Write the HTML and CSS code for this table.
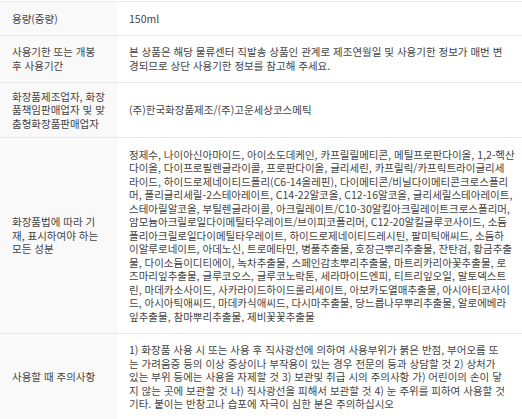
FILE: index.html
```html
<!DOCTYPE html>
<html lang="ko">
<head>
    <meta charset="UTF-8">
    <meta name="viewport" content="width=device-width, initial-scale=1.0">
    <title>상품정보 제공고시</title>
    <link rel="stylesheet" href="styles.css">
</head>
<body>
    <table class="info-table">
        <tbody>
            <tr>
                <th>용량(중량)</th>
                <td>150ml</td>
            </tr>
            <tr>
                <th>사용기한 또는 개봉 후 사용기간</th>
                <td>본 상품은 해당 물류센터 직발송 상품인 관계로 제조연월일 및 사용기한 정보가 매번 변<br>경되므로 상단 사용기한 정보를 참고해 주세요.</td>
            </tr>
            <tr>
                <th>화장품제조업자, 화장품책임판매업자 및 맞춤형화장품판매업자</th>
                <td>(주)한국화장품제조/(주)고운세상코스메틱</td>
            </tr>
            <tr>
                <th>화장품법에 따라 기재, 표시하여야 하는 모든 성분</th>
                <td>정제수, 나이아신아마이드, 아이소도데케인, 카프릴릴메티콘, 메틸프로판다이올, 1,2-헥산<br>다이올, 다이프로필렌글라이콜, 프로판다이올, 글리세린, 카프릴릭/카프릭트라이글리세<br>라이드, 하이드로제네이티드폴리(C6-14올레핀), 다이메티콘/비닐다이메티콘크로스폴리<br>머, 폴리글리세릴-2스테아레이트, C14-22알코올, C12-16알코올, 글리세릴스테아레이트,<br>스테아릴알코올, 부틸렌글라이콜, 아크릴레이트/C10-30알킬아크릴레이트크로스폴리머,<br>암모늄아크릴로일다이메틸타우레이트/브이피코폴리머, C12-20알킬글루코사이드, 소듐<br>폴리아크릴로일다이메틸타우레이트, 하이드로제네이티드레시틴, 팔미틱애씨드, 소듐하<br>이알루로네이트, 아데노신, 트로메타민, 병풀추출물, 호장근뿌리추출물, 잔탄검, 황금추출<br>물, 다이소듐이디티에이, 녹차추출물, 스페인감초뿌리추출물, 마트리카리아꽃추출물, 로<br>즈마리잎추출물, 글루코오스, 글루코노락톤, 세라마이드엔피, 티트리잎오일, 말토덱스트<br>린, 마데카소사이드, 사카라이드하이드롤리세이트, 아보카도열매추출물, 아시아티코사이<br>드, 아시아틱애씨드, 마데카식애씨드, 다시마추출물, 당느릅나무뿌리추출물, 알로에베라<br>잎추출물, 참마뿌리추출물, 제비꽃꽃추출물</td>
            </tr>
            <tr>
                <th>사용할 때 주의사항</th>
                <td>1) 화장품 사용 시 또는 사용 후 직사광선에 의하여 사용부위가 붉은 반점, 부어오름 또<br>는 가려움증 등의 이상 증상이나 부작용이 있는 경우 전문의 등과 상담할 것 2) 상처가<br>있는 부위 등에는 사용을 자제할 것 3) 보관및 취급 시의 주의사항 가) 어린이의 손이 닿<br>지 않는 곳에 보관할 것 나) 직사광선을 피해서 보관할 것 4) 눈 주위를 피하여 사용할 것<br>기타. 붙이는 반창고나 습포에 자극이 심한 분은 주의하십시오</td>
            </tr>
        </tbody>
    </table>
</body>
</html>
```

FILE: styles.css
```css
body {
    margin: 0;
    padding-top: 1px;
    background-color: #fff;
    font-family: 'Noto Sans CJK KR', 'Noto Sans', sans-serif;
    font-size: 10.5px;
    color: #444;
}

.info-table {
    width: 100%;
    border-collapse: collapse;
    table-layout: fixed;
    border-top: 1px solid #e8e8e8;
}

.info-table th,
.info-table td {
    line-height: 13.5px;
    text-align: left;
    vertical-align: middle;
    border-bottom: 1px solid #e8e8e8;
}

.info-table th {
    width: 93px;
    padding: 7px 12px;
    background-color: #f9f9f9;
    font-weight: normal;
}

.info-table td {
    padding: 9.5px 6px 9.5px 12px;
}
```
